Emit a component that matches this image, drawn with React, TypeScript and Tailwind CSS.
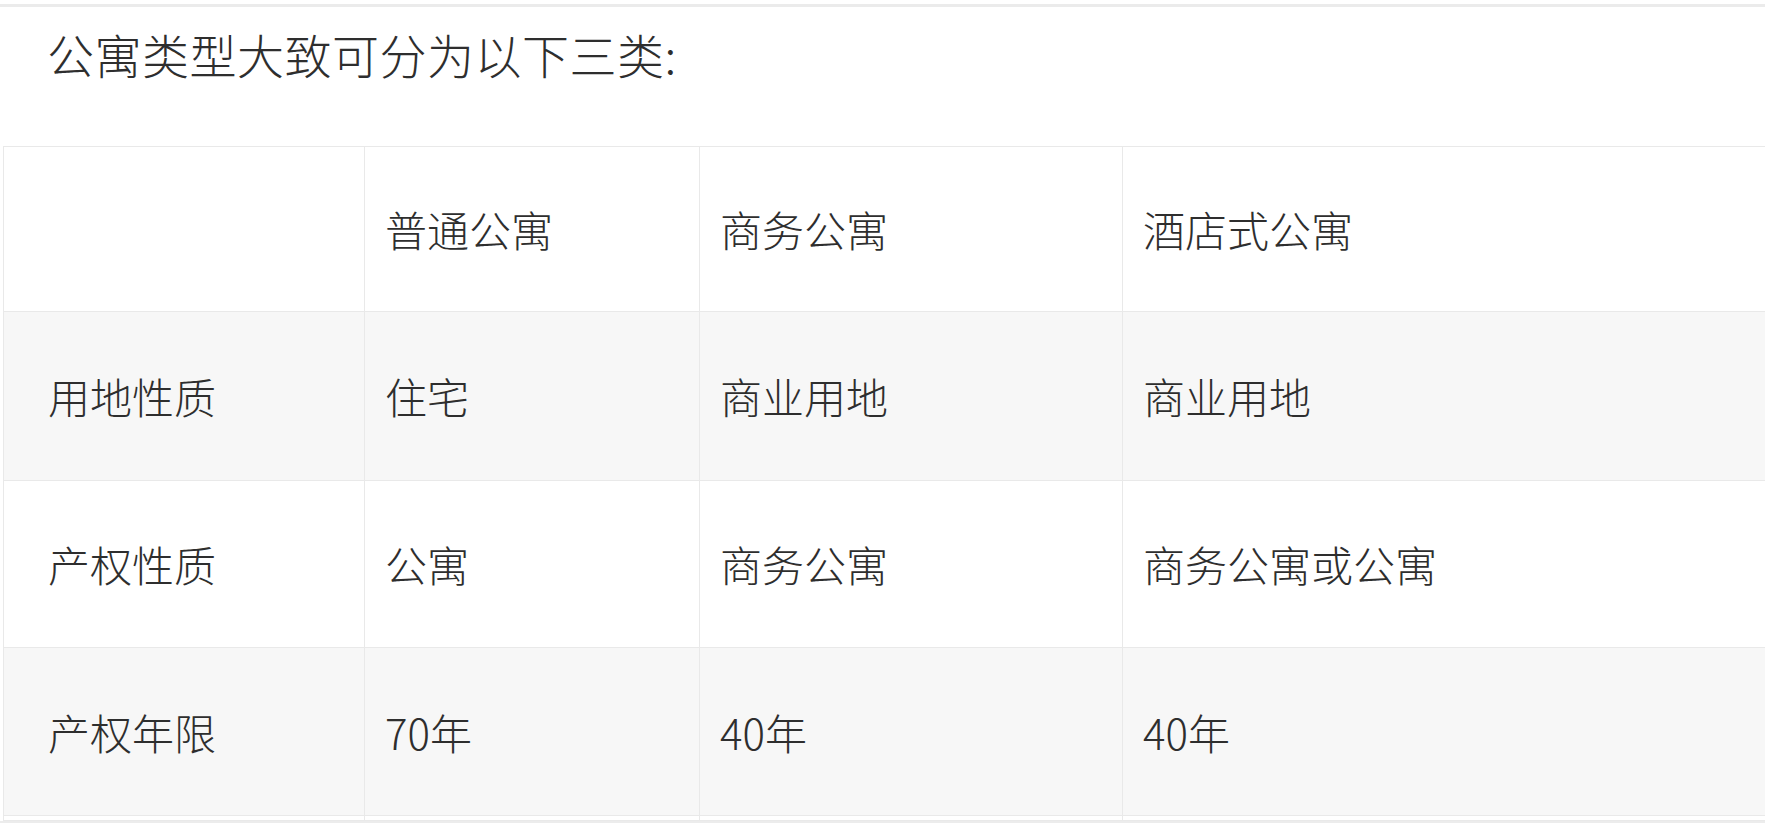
const rows = [
  { label: "", cells: ["普通公寓", "商务公寓", "酒店式公寓"], striped: false, h: "h-[165px]" },
  { label: "用地性质", cells: ["住宅", "商业用地", "商业用地"], striped: true, h: "h-[169px]" },
  { label: "产权性质", cells: ["公寓", "商务公寓", "商务公寓或公寓"], striped: false, h: "h-[167px]" },
  { label: "产权年限", cells: ["70年", "40年", "40年"], striped: true, h: "h-[168px]" },
  { label: "", cells: ["", "", ""], striped: false, h: "h-[5px]" },
];

export default function App() {
  return (
    <div
      className="h-[823px] w-[1765px] overflow-hidden bg-white font-light text-[#2e2e2e]"
      style={{ fontFamily: '"Noto Sans CJK SC", "Noto Sans", sans-serif' }}
    >
      <div className="mt-[4px] border-t-[3px] border-[#ebebeb]" />
      <p className="pl-[47px] pt-[11px] text-[47px] leading-[72px] tracking-[0.5px]">
        公寓类型大致可分为以下三类:
      </p>
      <div className="mt-[56px] pl-[3px]">
        <table className="w-[2000px] table-fixed border-collapse text-[42px]">
          <colgroup>
            <col className="w-[361px]" />
            <col className="w-[335px]" />
            <col className="w-[423px]" />
            <col />
          </colgroup>
          <tbody>
            {rows.map((row, i) => (
              <tr
                key={i}
                className={`${row.h} ${row.striped ? "bg-[#f7f7f7]" : "bg-white"}`}
              >
                <td className="border border-[#e9e9e9] p-0 pl-[44px] align-middle leading-none">
                  {row.label}
                </td>
                {row.cells.map((c, j) => (
                  <td
                    key={j}
                    className="border border-[#e9e9e9] p-0 pl-[20px] align-middle leading-none"
                  >
                    {c}
                  </td>
                ))}
              </tr>
            ))}
          </tbody>
        </table>
      </div>
      <div className="h-[3px] bg-[#ececec]" />
    </div>
  );
}
